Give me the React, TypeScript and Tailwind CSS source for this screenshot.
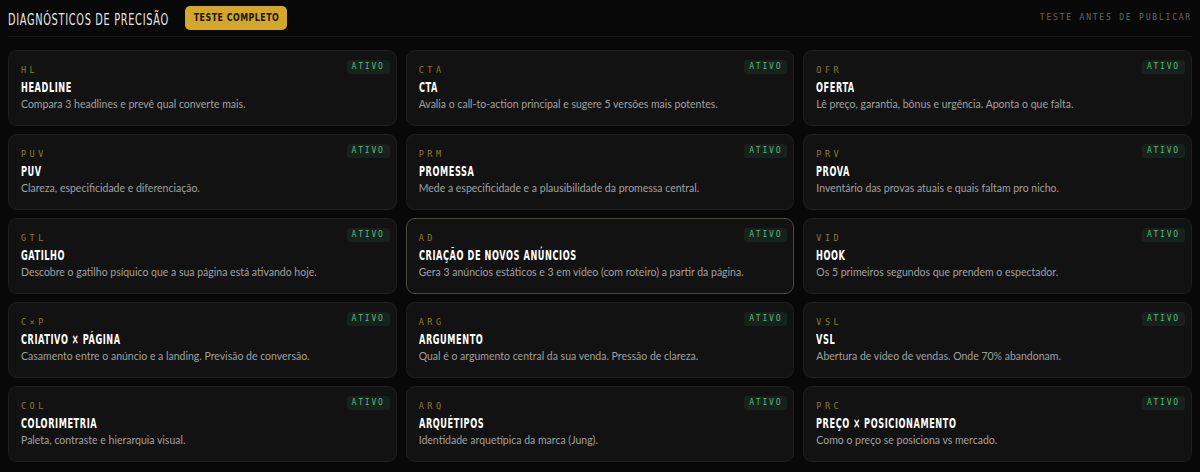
const tests = [
  { code: "HL", title: "HEADLINE", desc: "Compara 3 headlines e prevê qual converte mais." },
  { code: "CTA", title: "CTA", desc: "Avalia o call-to-action principal e sugere 5 versões mais potentes." },
  { code: "OFR", title: "OFERTA", desc: "Lê preço, garantia, bônus e urgência. Aponta o que falta." },
  { code: "PUV", title: "PUV", desc: "Clareza, especificidade e diferenciação." },
  { code: "PRM", title: "PROMESSA", desc: "Mede a especificidade e a plausibilidade da promessa central." },
  { code: "PRV", title: "PROVA", desc: "Inventário das provas atuais e quais faltam pro nicho." },
  { code: "GTL", title: "GATILHO", desc: "Descobre o gatilho psíquico que a sua página está ativando hoje." },
  { code: "AD", title: "CRIAÇÃO DE NOVOS ANÚNCIOS", desc: "Gera 3 anúncios estáticos e 3 em vídeo (com roteiro) a partir da página.", focus: true },
  { code: "VID", title: "HOOK", desc: "Os 5 primeiros segundos que prendem o espectador." },
  { code: "C×P", title: "CRIATIVO × PÁGINA", desc: "Casamento entre o anúncio e a landing. Previsão de conversão." },
  { code: "ARG", title: "ARGUMENTO", desc: "Qual é o argumento central da sua venda. Pressão de clareza." },
  { code: "VSL", title: "VSL", desc: "Abertura de vídeo de vendas. Onde 70% abandonam." },
  { code: "COL", title: "COLORIMETRIA", desc: "Paleta, contraste e hierarquia visual." },
  { code: "ARQ", title: "ARQUÉTIPOS", desc: "Identidade arquetípica da marca (Jung)." },
  { code: "PRC", title: "PREÇO × POSICIONAMENTO", desc: "Como o preço se posiciona vs mercado." },
];

// títulos em fonte estreita e alta
const condensed = "font-['DejaVu_Sans',sans-serif] font-stretch-condensed";
const mono = "font-['DejaVu_Sans_Mono','Liberation_Mono',monospace]";

export default function App() {
  return (
    <div className="min-h-[472px] bg-[#080808] px-2 font-['Lato','Noto_Sans',sans-serif]">
      {/* cabeçalho */}
      <div className="flex h-[37px] items-center border-b border-[#1a1a1a]">
        <h1 className="mt-[2px] w-[162px] whitespace-nowrap">
          <span className={`${condensed} inline-block origin-left scale-x-[0.68] text-[16px] tracking-[1px] text-[#e6e6e6]`}>
            DIAGNÓSTICOS DE PRECISÃO
          </span>
        </h1>
        <button className="ml-[15px] flex h-[24px] w-[102px] items-center justify-center rounded-[5px] bg-[#d2a72c]">
          <span className={`${condensed} inline-block scale-x-[0.8] whitespace-nowrap text-[11px] font-bold tracking-[0.6px] text-[#1a1408]`}>
            TESTE COMPLETO
          </span>
        </button>
        <span className={`${mono} ml-auto mt-[-1px] text-[8px] tracking-[1.8px] text-[#666]`}>TESTE ANTES DE PUBLICAR</span>
      </div>

      {/* grade de testes */}
      <div className="mt-[13px] grid grid-cols-3 gap-x-[9px] gap-y-[8px]">
        {tests.map((t) => (
          <div
            key={t.code}
            className={`relative h-[76px] rounded-[9px] border bg-[#121212] px-[12px] pt-[14px] ${
              t.focus ? "border-[#4a4a40]" : "border-[#1f1f1f]"
            }`}
          >
            <span className={`${mono} absolute right-[6px] top-[9px] rounded-[3px] bg-[#17221c] px-[5px] py-[1px] text-[8px] tracking-[1.8px] text-[#5cb585]`}>
              ATIVO
            </span>
            <div className={`${mono} text-[8.5px] leading-[11px] tracking-[3.5px] text-[#8a7a3c]`}>{t.code}</div>
            <div className="mt-[1px] whitespace-nowrap leading-[18px]">
              <span className={`${condensed} inline-block origin-left scale-x-[0.65] text-[14px] font-bold tracking-[0.9px] text-white`}>
                {t.title}
              </span>
            </div>
            <div className="mt-[1px] text-[10.5px] leading-[15px] text-[#a0a0a0]">{t.desc}</div>
          </div>
        ))}
      </div>
    </div>
  );
}
